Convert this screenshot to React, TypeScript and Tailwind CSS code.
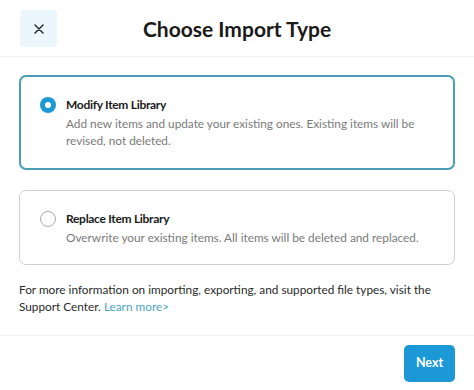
import React, { useState } from 'react';

type Option = {
  id: string;
  title: string;
  description: string;
};

const OPTIONS: Option[] = [
  {
    id: 'modify',
    title: 'Modify Item Library',
    description: 'Add new items and update your existing ones. Existing items will be revised, not deleted.',
  },
  {
    id: 'replace',
    title: 'Replace Item Library',
    description: 'Overwrite your existing items. All items will be deleted and replaced.',
  },
];

// 单选按钮
const Radio: React.FC<{ checked: boolean }> = ({ checked }) =>
  checked ? (
    <span className="mt-[1px] flex h-[16px] w-[16px] shrink-0 items-center justify-center rounded-full bg-[#1b98d5]">
      <span className="h-[6px] w-[6px] rounded-full bg-white" />
    </span>
  ) : (
    <span className="mt-[1px] h-[16px] w-[16px] shrink-0 rounded-full border-[1.5px] border-[#a9a9a9] bg-white" />
  );

export default function App() {
  const [selected, setSelected] = useState('modify');

  return (
    <div
      className="flex h-[390px] w-[474px] flex-col overflow-hidden rounded-[6px] bg-white text-[#1f1f1f]"
      style={{ fontFamily: 'Lato, "Liberation Sans", sans-serif' }}
    >
      {/* 头部 */}
      <div className="relative flex h-[57px] shrink-0 items-center justify-center border-b border-[#f2f2f2]">
        <button className="absolute left-[20px] top-[10px] flex h-[37px] w-[37px] items-center justify-center rounded-[4px] bg-[#ebf6fd]">
          <svg width="10" height="10" viewBox="0 0 10 10" fill="none">
            <path d="M1 1L9 9M9 1L1 9" stroke="#2b2b2b" strokeWidth="1.5" strokeLinecap="round" />
          </svg>
        </button>
        <h1 className="mt-[1px] text-[21px] font-bold text-[#1a1a1a]">Choose Import Type</h1>
      </div>

      {/* 选项 */}
      <div className="flex flex-col gap-[20px] px-[19px] pt-[18px]">
        {OPTIONS.map((opt) => {
          const checked = selected === opt.id;
          return (
            <button
              key={opt.id}
              onClick={() => setSelected(opt.id)}
              className={
                checked
                  ? 'flex gap-[10px] rounded-[7px] border-2 border-[#4a9db4] px-[19px] pb-[19px] pt-[19px] text-left'
                  : 'flex gap-[10px] rounded-[7px] border border-[#cfcfcf] px-[20px] pb-[18px] pt-[19px] text-left'
              }
            >
              <Radio checked={checked} />
              <div className="flex flex-col">
                <span className="text-[12px] font-bold leading-[18px] tracking-[-0.3px] text-[#1a1a1a]">{opt.title}</span>
                <span className="mt-[1px] text-[11.8px] leading-[17px] text-[#7a7a7a]">{opt.description}</span>
              </div>
            </button>
          );
        })}
      </div>

      {/* 说明 */}
      <div className="px-[19px] pt-[16px] text-[11.8px] leading-[17px] text-[#2a2a2a]">
        For more information on importing, exporting, and supported file types, visit the Support Center.{' '}
        <span className="text-[#4aa2bf]">Learn more&gt;</span>
      </div>

      {/* 底部 */}
      <div className="mt-auto flex h-[55px] shrink-0 items-start justify-end border-t border-[#f2f2f2] px-[19px] pt-[9px]">
        <button className="flex h-[37px] w-[51px] items-center justify-center rounded-[5px] bg-[#1b98d5] text-[12.5px] font-bold text-white">
          Next
        </button>
      </div>
    </div>
  );
}
